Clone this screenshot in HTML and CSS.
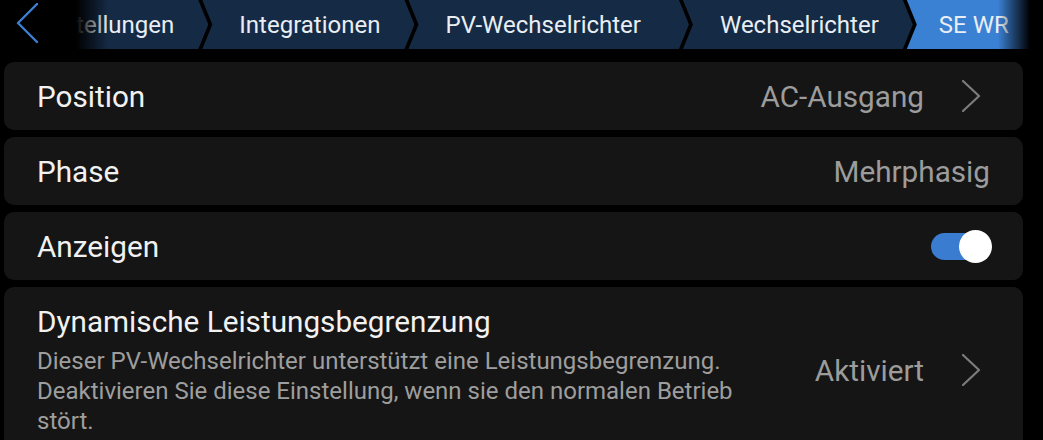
FILE: index.html
```html
<!DOCTYPE html>
<html lang="de">
<head>
<meta charset="utf-8">
<title>SE WR</title>
<link rel="stylesheet" href="styles.css">
</head>
<body>
<header class="topbar">
  <nav class="crumbs">
    <span class="crumb">Einstellungen</span>
    <span class="crumb">Integrationen</span>
    <span class="crumb crumb-wide">PV-Wechselrichter</span>
    <span class="crumb">Wechselrichter</span>
    <span class="crumb crumb-active">SE WR</span>
  </nav>
  <div class="fade-left"></div>
  <div class="fade-right"></div>
  <button class="back" aria-label="Zurück">
    <svg width="24" height="42" viewBox="0 0 24 42"><path d="M21 1 L2 20 L21 39" fill="none" stroke="#3d7fd0" stroke-width="2.4" stroke-linecap="round" stroke-linejoin="round"/></svg>
  </button>
</header>
<main class="list">
  <div class="card row">
    <span class="label">Position</span>
    <span class="value">AC-Ausgang</span>
    <svg class="chev" width="28" height="32" viewBox="0 0 28 32"><path d="M1 1 L17 16 L1 31" fill="none" stroke="#7c7c7c" stroke-width="2.2" stroke-linecap="round" stroke-linejoin="round"/></svg>
  </div>
  <div class="card row">
    <span class="label">Phase</span>
    <span class="value">Mehrphasig</span>
  </div>
  <div class="card row">
    <span class="label">Anzeigen</span>
    <span class="toggle"><span class="thumb"></span></span>
  </div>
  <div class="card row row-tall">
    <div class="text">
      <div class="label">Dynamische Leistungsbegrenzung</div>
      <div class="desc">Dieser PV-Wechselrichter unterstützt eine Leistungsbegrenzung. Deaktivieren Sie diese Einstellung, wenn sie den normalen Betrieb stört.</div>
    </div>
    <span class="value">Aktiviert</span>
    <svg class="chev" width="28" height="32" viewBox="0 0 28 32"><path d="M1 1 L17 16 L1 31" fill="none" stroke="#7c7c7c" stroke-width="2.2" stroke-linecap="round" stroke-linejoin="round"/></svg>
  </div>
</main>
</body>
</html>
```

FILE: styles.css
```css
html, body {
  margin: 0;
  padding: 0;
  background: #000;
  font-family: Roboto, "Noto Sans", sans-serif;
  overflow: hidden;
}

.topbar {
  position: relative;
  height: 49px;
  overflow: hidden;
}

.crumbs {
  display: flex;
  height: 100%;
  margin-left: -6px;
}

.crumb {
  flex: none;
  display: flex;
  align-items: center;
  padding: 0 34px 0 37px;
  font-size: 24px;
  color: #e9eef4;
  background: #152a45;
  clip-path: polygon(0 0, calc(100% - 10px) 0, 100% 50%, calc(100% - 10px) 100%, 0 100%, 10px 50%);
}

.crumb + .crumb {
  margin-left: -6px;
}

.crumb-wide {
  padding-right: 48px;
}

.crumb-active {
  background: #3a80d3;
  padding-left: 32px;
  padding-right: 80px;
  clip-path: polygon(0 0, 100% 0, 100% 100%, 0 100%, 10px 50%);
}

.fade-left {
  position: absolute;
  left: 0;
  top: 0;
  width: 110px;
  height: 100%;
  background: linear-gradient(to right, #000 0, #000 76px, rgba(0,0,0,0) 108px);
}

.fade-right {
  position: absolute;
  right: 0;
  top: 0;
  width: 45px;
  height: 100%;
  background: linear-gradient(to right, rgba(0,0,0,0) 0, #000 32px);
}

.back {
  position: absolute;
  left: 16px;
  top: 3px;
  padding: 0;
  border: 0;
  background: none;
  line-height: 0;
}

.list {
  display: flex;
  flex-direction: column;
  gap: 7px;
  padding: 13px 20px 0 4px;
}

.card {
  background: #151515;
  border-radius: 10px;
}

.row {
  display: flex;
  align-items: center;
  min-height: 68px;
  padding: 0 33px 0 33px;
  box-sizing: border-box;
}

.label {
  flex: 1;
  font-size: 29.7px;
  color: #f1f1f1;
}

.value {
  font-size: 29.7px;
  color: #9c9c9c;
}

.chev {
  flex: none;
  margin-left: 38px;
}

.toggle {
  position: relative;
  width: 54px;
  height: 27px;
  margin-right: 5px;
  border-radius: 14px;
  background: #3a7dd0;
}

.thumb {
  position: absolute;
  right: -7px;
  top: -3px;
  width: 33px;
  height: 33px;
  border-radius: 50%;
  background: #fff;
}

.row-tall {
  align-items: center;
  padding-top: 17px;
  padding-bottom: 17px;
}

.text {
  flex: 1;
}

.row-tall .label {
  line-height: 36px;
}

.desc {
  width: 730px;
  margin-top: 6px;
  font-size: 24px;
  line-height: 30px;
  color: #9e9e9e;
}
```
